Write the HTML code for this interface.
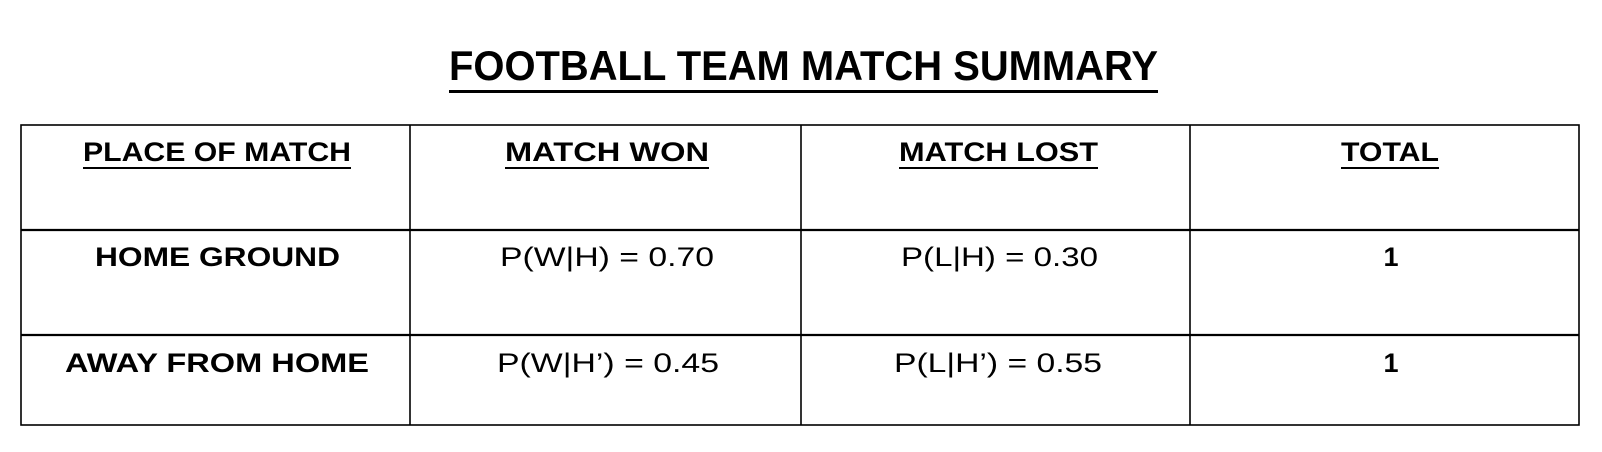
<!DOCTYPE html>
<html><head><meta charset="utf-8"><style>html,body{margin:0;padding:0;background:#fff;width:1602px;height:452px;overflow:hidden}</style></head>
<body>
<svg width="1602" height="452" viewBox="0 0 1602 452" xmlns="http://www.w3.org/2000/svg" font-family="'Liberation Sans', sans-serif" fill="#000">
<g stroke="#000" stroke-width="1.6" fill="none">
<rect x="21" y="125" width="1558" height="300"/>
<line x1="21" y1="230" x2="1579" y2="230" stroke-width="2.2"/>
<line x1="21" y1="335" x2="1579" y2="335" stroke-width="2.2"/>
<line x1="410" y1="125" x2="410" y2="425"/>
<line x1="801" y1="125" x2="801" y2="425"/>
<line x1="1190" y1="125" x2="1190" y2="425"/>
</g>
<text x="449" y="80" font-size="42" font-weight="bold" textLength="709" lengthAdjust="spacingAndGlyphs">FOOTBALL TEAM MATCH SUMMARY</text>
<rect x="449" y="90" width="709" height="3"/>
<g font-size="27" font-weight="bold">
<text x="83" y="161" textLength="268" lengthAdjust="spacingAndGlyphs">PLACE OF MATCH</text>
<rect x="83" y="167" width="268" height="2"/>
<text x="505" y="161" textLength="204" lengthAdjust="spacingAndGlyphs">MATCH WON</text>
<rect x="505" y="167" width="204" height="2"/>
<text x="899" y="161" textLength="199" lengthAdjust="spacingAndGlyphs">MATCH LOST</text>
<rect x="899" y="167" width="199" height="2"/>
<text x="1341" y="161" textLength="98" lengthAdjust="spacingAndGlyphs">TOTAL</text>
<rect x="1341" y="167" width="98" height="2"/>
<text x="95" y="266" textLength="245" lengthAdjust="spacingAndGlyphs">HOME GROUND</text>
<text x="65" y="372" textLength="304" lengthAdjust="spacingAndGlyphs">AWAY FROM HOME</text>
<text x="1391" y="266" text-anchor="middle">1</text>
<text x="1391" y="372" text-anchor="middle">1</text>
</g>
<g font-size="27">
<text x="500" y="266" textLength="214" lengthAdjust="spacingAndGlyphs">P(W|H) = 0.70</text>
<text x="901" y="266" textLength="197" lengthAdjust="spacingAndGlyphs">P(L|H) = 0.30</text>
<text x="497" y="372" textLength="222" lengthAdjust="spacingAndGlyphs">P(W|H’) = 0.45</text>
<text x="894" y="372" textLength="208" lengthAdjust="spacingAndGlyphs">P(L|H’) = 0.55</text>
</g>
</svg>
</body></html>
